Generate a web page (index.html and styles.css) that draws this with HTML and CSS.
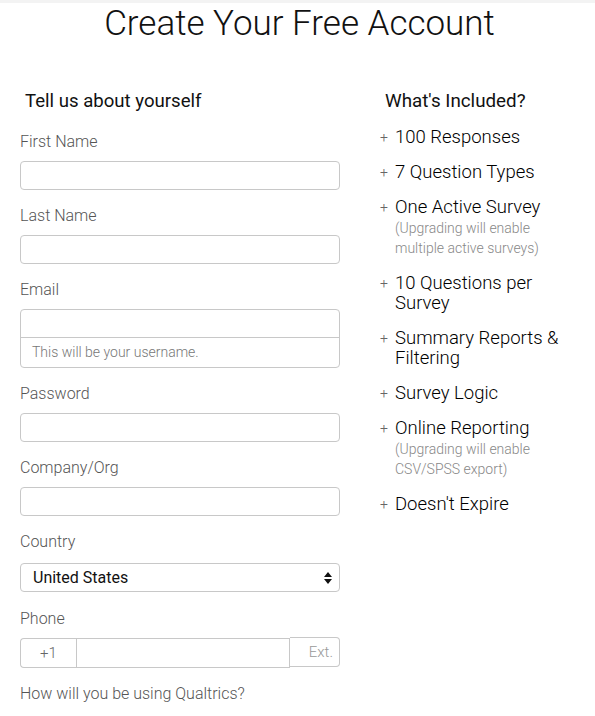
FILE: index.html
```html
<!DOCTYPE html>
<html lang="en">
<head>
<meta charset="utf-8">
<title>Create Your Free Account</title>
<link rel="stylesheet" href="styles.css">
</head>
<body>
<div class="topbar"></div>
<h1 class="title">Create Your Free Account</h1>
<div class="columns">
  <form class="form">
    <h2 class="heading">Tell us about yourself</h2>
    <div class="field">
      <label class="label">First Name</label>
      <div class="input"></div>
    </div>
    <div class="field">
      <label class="label">Last Name</label>
      <div class="input"></div>
    </div>
    <div class="field">
      <label class="label">Email</label>
      <div class="input-group">
        <div class="input input-top"></div>
        <div class="helper">This will be your username.</div>
      </div>
    </div>
    <div class="field">
      <label class="label">Password</label>
      <div class="input"></div>
    </div>
    <div class="field">
      <label class="label">Company/Org</label>
      <div class="input"></div>
    </div>
    <div class="field field-country">
      <label class="label">Country</label>
      <div class="select">
        <span>United States</span>
        <svg class="arrows" width="8" height="12" viewBox="0 0 8 12"><path d="M4 0 L8 5 L0 5 Z M0 7 L8 7 L4 12 Z" fill="#111"/></svg>
      </div>
    </div>
    <div class="field">
      <label class="label">Phone</label>
      <div class="phone">
        <div class="prefix">+1</div>
        <div class="phone-num"></div>
        <div class="ext">Ext.</div>
      </div>
    </div>
    <div class="field">
      <label class="label">How will you be using Qualtrics?</label>
    </div>
  </form>
  <aside class="included">
    <h2 class="heading">What's Included?</h2>
    <ul class="list">
      <li class="item"><span class="plus">+</span><div class="item-text">100 Responses</div></li>
      <li class="item"><span class="plus">+</span><div class="item-text">7 Question Types</div></li>
      <li class="item"><span class="plus">+</span><div class="item-text">One Active Survey<div class="sub">(Upgrading will enable multiple active surveys)</div></div></li>
      <li class="item"><span class="plus">+</span><div class="item-text">10 Questions per Survey</div></li>
      <li class="item"><span class="plus">+</span><div class="item-text">Summary Reports &amp; Filtering</div></li>
      <li class="item"><span class="plus">+</span><div class="item-text">Survey Logic</div></li>
      <li class="item"><span class="plus">+</span><div class="item-text">Online Reporting<div class="sub">(Upgrading will enable CSV/SPSS export)</div></div></li>
      <li class="item"><span class="plus">+</span><div class="item-text">Doesn't Expire</div></li>
    </ul>
  </aside>
</div>
</body>
</html>
```
FILE: styles.css
```css
* { box-sizing: border-box; }
html, body { margin: 0; padding: 0; background: #fff; }
body {
  font-family: Roboto, "Liberation Sans", sans-serif;
  color: #222;
  width: 595px;
  overflow: hidden;
}
.topbar { height: 3px; background: #f3f3f3; }
.title {
  margin: 0;
  font-weight: 300;
  font-size: 35px;
  line-height: 42px;
  text-align: center;
  color: #111;
  padding-left: 4px;
}
.columns {
  display: flex;
  padding-left: 20px;
  margin-top: 46px;
}
.form { width: 320px; margin: 0; }
.included { margin-left: 40px; width: 195px; }
.heading {
  margin: 0 0 21px 0;
  font-size: 18.6px;
  line-height: 20px;
  font-weight: 400;
  color: #111;
}
.form .heading { padding-left: 5px; }
.included .heading { padding-left: 5px; margin-bottom: 16px; font-size: 18.8px; }
.field { margin-bottom: 16px; }
.label {
  display: block;
  font-size: 16px;
  line-height: 20px;
  font-weight: 300;
  color: #555;
  margin-bottom: 9px;
}
.input {
  height: 29px;
  border: 1px solid #c8c8c8;
  border-radius: 4px;
}
.input-group { border: 1px solid #c8c8c8; border-radius: 4px; }
.input-group .input-top { border: none; border-bottom: 1px solid #c8c8c8; border-radius: 0; height: 28px; }
.helper {
  height: 29px;
  line-height: 28px;
  padding-left: 11px;
  font-size: 14px;
  font-weight: 300;
  color: #777;
}
.field-country { margin-bottom: 17px; }
.field-country .label { margin-bottom: 11px; }
.select {
  height: 29px;
  border: 1px solid #c8c8c8;
  border-radius: 4px;
  display: flex;
  align-items: center;
  justify-content: space-between;
  padding: 0 7px 0 12px;
  font-size: 16px;
  color: #111;
}
.phone { display: flex; height: 30px; align-items: flex-start; }
.prefix {
  width: 56px;
  height: 30px;
  border: 1px solid #c8c8c8;
  border-right: none;
  border-radius: 4px 0 0 4px;
  text-align: center;
  line-height: 28px;
  font-size: 15px;
  font-weight: 300;
  color: #666;
}
.phone-num { flex: 1; height: 30px; border: 1px solid #c8c8c8; }
.ext {
  width: 50px;
  height: 30px;
  margin-top: -1px;
  border: 1px solid #c8c8c8;
  border-left: none;
  border-radius: 0 4px 4px 0;
  text-align: right;
  padding-right: 6px;
  line-height: 28px;
  font-size: 15px;
  font-weight: 300;
  color: #999;
}
.list { list-style: none; margin: 0; padding: 0; }
.item { display: flex; margin-bottom: 15px; }
.plus {
  width: 15px;
  font-size: 14px;
  line-height: 20px;
  font-weight: 300;
  color: #666;
}
.item-text {
  flex: 1;
  font-size: 18.5px;
  line-height: 20px;
  font-weight: 300;
  color: #000;
}
.sub {
  font-size: 14px;
  line-height: 20px;
  font-weight: 300;
  color: #888;
  margin-top: 1px;
  max-width: 155px;
}
```
